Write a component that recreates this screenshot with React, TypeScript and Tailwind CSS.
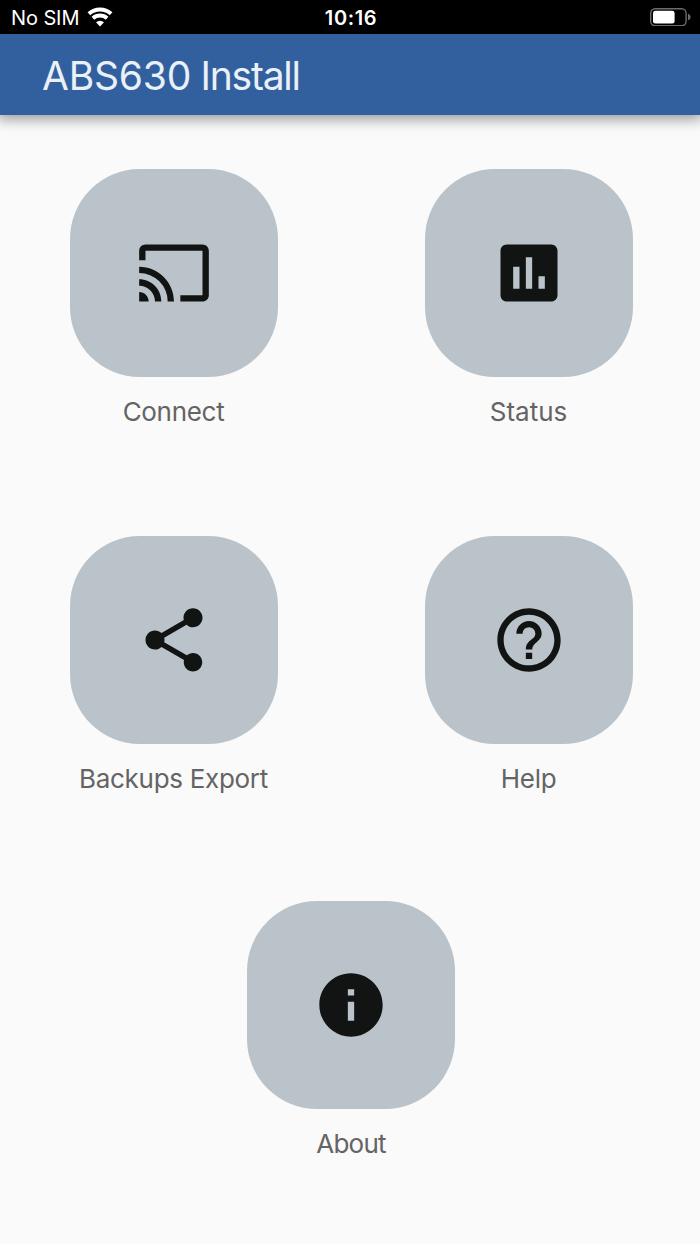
import { MdCast, MdAssessment, MdShare, MdHelpOutline, MdInfo } from "react-icons/md";
import type { IconType } from "react-icons";

type Tile = {
  label: string;
  icon: IconType;
  tracking?: string;
};

const rows: Tile[][] = [
  [
    { label: "Connect", icon: MdCast, tracking: "tracking-[-0.3px]" },
    { label: "Status", icon: MdAssessment },
  ],
  [
    { label: "Backups Export", icon: MdShare, tracking: "tracking-[-0.3px]" },
    { label: "Help", icon: MdHelpOutline, tracking: "tracking-[-0.3px]" },
  ],
  [{ label: "About", icon: MdInfo, tracking: "tracking-[-0.8px]" }],
];

function WifiIcon() {
  return (
    <svg width="26" height="20" viewBox="0 0 26 20" fill="none" stroke="white">
      <path d="M1.9 6.7a16.6 16.6 0 0 1 22.2 0" strokeWidth="4.1" />
      <path d="M5.9 11.3a10.6 10.6 0 0 1 14.2 0" strokeWidth="3.9" />
      <path d="M13 19.4l-4-4.2a6 6 0 0 1 8 0z" fill="white" stroke="none" />
    </svg>
  );
}

function BatteryIcon() {
  return (
    <svg width="41" height="18" viewBox="0 0 41 18">
      <rect x="0.7" y="0.7" width="35.4" height="17" rx="4.5" fill="none" stroke="#6c6c6c" strokeWidth="1.4" />
      <rect x="3" y="2.8" width="21.6" height="12.8" rx="2.4" fill="white" />
      <path d="M38 5.8c3.4 1 3.4 5.4 0 6.4z" fill="#6c6c6c" />
    </svg>
  );
}

function StatusBar() {
  return (
    <div className="grid h-[34px] grid-cols-3 items-center bg-black pr-[9px] pl-[11px] text-[20px] text-white">
      <div className="flex items-center gap-2">
        <span className="pt-0.5 tracking-[-0.1px]">No SIM</span>
        <WifiIcon />
      </div>
      <span className="pt-0.5 text-center font-semibold tracking-[0.6px]">10:16</span>
      <div className="flex justify-end">
        <BatteryIcon />
      </div>
    </div>
  );
}

function MenuTile({ label, icon: Icon, tracking }: Tile) {
  return (
    <div className="flex w-[355px] shrink-0 flex-col items-center">
      <button className="flex size-[208px] items-center justify-center rounded-[70px] bg-[#bac3ca] text-[#111413]">
        <Icon size={76} />
      </button>
      <span className={`mt-[17px] text-[26px] leading-9 text-[#646464] ${tracking ?? ""}`}>{label}</span>
    </div>
  );
}

export default function App() {
  return (
    <div className="flex h-[1244px] w-[700px] flex-col overflow-hidden bg-[#fafafa] font-['Inter',sans-serif]">
      <StatusBar />
      <header className="flex h-[81px] items-center bg-[#32609f] px-[42px] pt-[3px] text-[39px] text-[#eaf0f8] shadow-[0_1px_13px_3px_rgba(0,0,0,0.4)] [clip-path:inset(0_0_-24px_0)]">
        <h1 className="tracking-[-0.2px] [word-spacing:-1.5px]">
          ABS630 <span className="tracking-[-1.2px]">Install</span>
        </h1>
      </header>
      <main className="grid grid-rows-[367px_365px_auto] pt-[54px]">
        {rows.map((row) => (
          <div key={row[0].label} className="-mr-[5px] -ml-1 flex justify-center">
            {row.map((tile) => (
              <MenuTile key={tile.label} {...tile} />
            ))}
          </div>
        ))}
      </main>
    </div>
  );
}
